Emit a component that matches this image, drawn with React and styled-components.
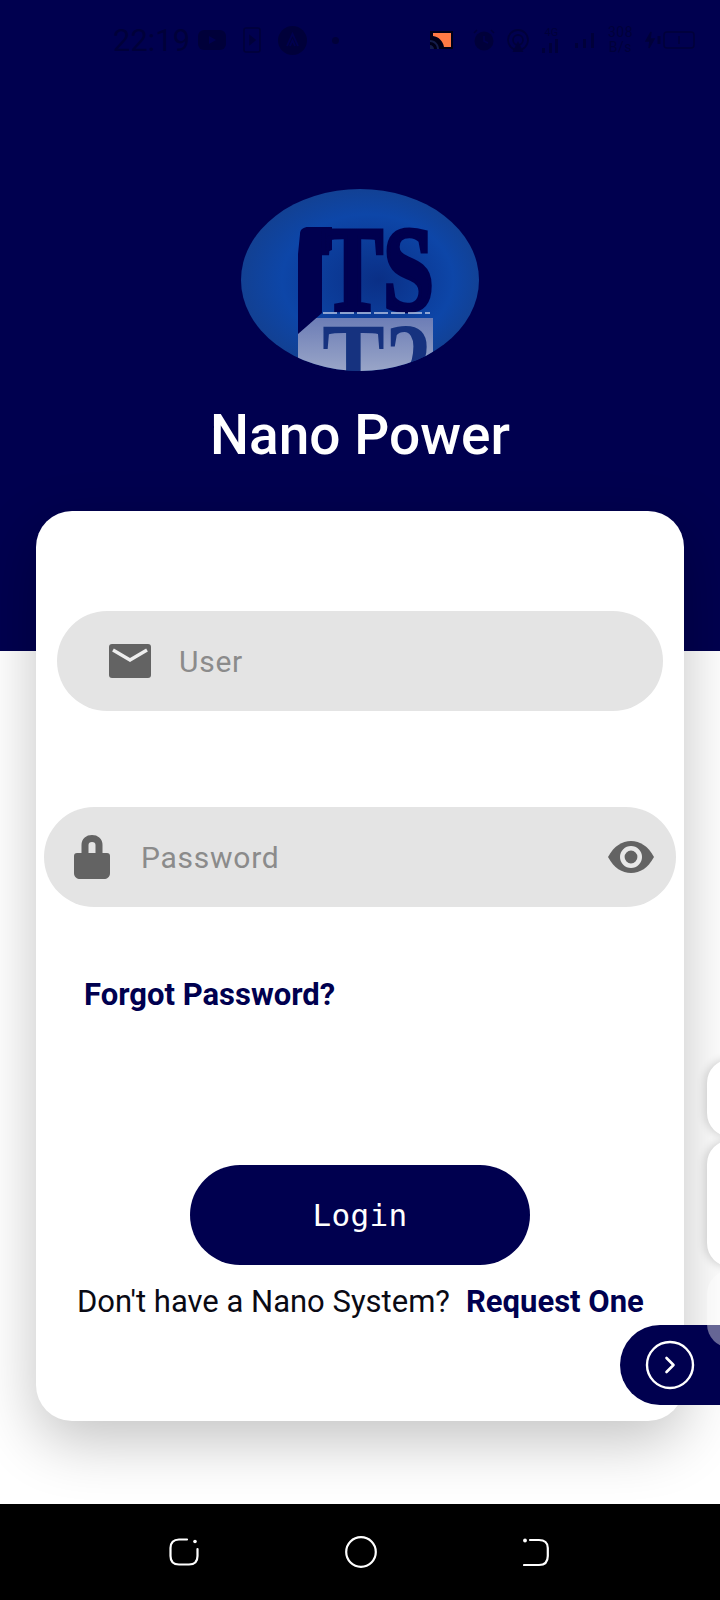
import React from 'react';
import styled, { createGlobalStyle } from 'styled-components';

const NAVY = '#00004f';
const INK = '#00003a';

const GlobalStyle = createGlobalStyle`
  html, body {
    margin: 0;
    padding: 0;
    background: #ffffff;
    font-family: Roboto, "Liberation Sans", sans-serif;
  }
`;

export default function App() {
  return (
    <Page>
      <GlobalStyle />
      <Main>
        <Header>
          <StatusBar>
            <Time>22:19</Time>
            <StatusIcons />
            <StatusRight />
          </StatusBar>
          <Logo />
          <Title>Nano Power</Title>
        </Header>
        <Card>
          <Field $inset={21} $iconGap={28} $pad={52}>
            <MailIcon />
            <Placeholder>User</Placeholder>
          </Field>
          <Field $inset={8} $iconGap={31} $pad={30} $top={96}>
            <LockIcon />
            <Placeholder>Password</Placeholder>
            <EyeIcon />
          </Field>
          <Forgot>Forgot Password?</Forgot>
          <LoginButton>Login</LoginButton>
          <Footer>
            Don't have a Nano System?
            <RequestLink>Request One</RequestLink>
          </Footer>
        </Card>
      </Main>
      <SidePill>
        <svg width="50" height="50" viewBox="0 0 50 50" fill="none" stroke="#fff">
          <circle cx="25" cy="25" r="23" strokeWidth="2.4" />
          <path d="M21.5 18 L28.5 25 L21.5 32" strokeWidth="2.6" strokeLinecap="round" strokeLinejoin="round" />
        </svg>
      </SidePill>
      <SideStack>
        <SidePanel $height={78} />
        <SidePanel $height={127} />
        <SidePanel $height={78} $faded />
      </SideStack>
      <NavBar>
        <RecentIcon />
        <svg width="32" height="32" viewBox="0 0 32 32" fill="none" stroke="#fff" strokeWidth="2.2">
          <circle cx="16" cy="16" r="14.8" />
        </svg>
        <BackIcon />
      </NavBar>
    </Page>
  );
}

function StatusIcons() {
  return (
    <IconRow>
      <svg width="28" height="20" viewBox="0 0 28 20">
        <rect width="28" height="20" rx="6" fill={INK} />
        <path d="M11 6 L18 10 L11 14 Z" fill={NAVY} />
      </svg>
      <svg width="18" height="26" viewBox="0 0 18 26" fill="none" stroke={INK} strokeWidth="1.6">
        <rect x="1" y="1" width="16" height="24" rx="2" />
        <path d="M7 9 L12 13 L7 17 Z" fill={INK} />
      </svg>
      <svg width="29" height="29" viewBox="0 0 29 29">
        <circle cx="14.5" cy="14.500" r="14.5" fill={INK} />
        <path d="M9 20 L14.5 8 L20 20 M12 20 L14.5 14.500 L17 20" fill="none" stroke={NAVY} strokeWidth="1.8" />
      </svg>
      <StatusDot />
    </IconRow>
  );
}

function StatusRight() {
  return (
    <RightRow>
      <CastIcon viewBox="0 0 23 18" width="23" height="18">
        <rect width="23" height="18" fill="#000018" />
        <path d="M3 2 H21 V16 H14 C13 10 9 6 3 5 Z" fill="#ff7a45" />
        <path d="M0 9 C5 9 9 13 9 18 H7 C7 14 4 11 0 11 Z M0 14 C2 14 4 16 4 18 H0 Z" fill="#141d4a" />
      </CastIcon>
      <svg width="22" height="22" viewBox="0 0 22 22">
        <circle cx="11" cy="12" r="9.500" fill={INK} />
        <path d="M1 4 L4 1 M21 4 L18 1" stroke={INK} strokeWidth="1.6" />
        <path d="M11 7 V12 L15 14" stroke={NAVY} strokeWidth="1.5" fill="none" />
      </svg>
      <svg width="22" height="23" viewBox="0 0 22 23" fill="none" stroke={INK} strokeWidth="1.8">
        <circle cx="11" cy="11" r="10" />
        <circle cx="11" cy="11" r="5" />
        <path d="M7 22 L11 14 L15 22 Z" fill={INK} />
      </svg>
      <SignalBlock>
        <TinyLabel>4G</TinyLabel>
        <svg width="21" height="15" viewBox="0 0 21 15" fill={INK}>
          <rect x="1" y="10" width="3" height="5" />
          <rect x="8" y="5" width="3" height="10" />
          <rect x="14" y="1" width="3" height="14" />
        </svg>
      </SignalBlock>
      <svg width="22" height="16" viewBox="0 0 22 16" fill={INK}>
        <rect x="1" y="11" width="3" height="5" />
        <rect x="9" y="7" width="3" height="9" />
        <rect x="17" y="1" width="3" height="15" />
      </svg>
      <Speed>
        308
        <br />
        B/s
      </Speed>
      <svg width="50" height="18" viewBox="0 0 50 18" fill="none" stroke={INK} strokeWidth="1.5">
        <path d="M6 1 L1 10 H5 L4 17 L9 8 H5 Z" fill={INK} />
        <path d="M14 5 V13" strokeWidth="3" />
        <rect x="19" y="1" width="30" height="16" rx="3" />
        <path d="M34 5 V13" />
      </svg>
    </RightRow>
  );
}

function Logo() {
  return (
    <LogoMark viewBox="0 0 240 184" width="240" height="184">
      <defs>
        <radialGradient id="logoBlue" cx="0.5" cy="0.5" r="0.6" fx="0.58" fy="0.5">
          <stop offset="0" stopColor="#0a2f86" />
          <stop offset="0.6" stopColor="#0d46a8" />
          <stop offset="1" stopColor="#153d86" />
        </radialGradient>
        <linearGradient id="logoGrey" x1="0" y1="0" x2="0" y2="1">
          <stop offset="0" stopColor="#6c7db6" />
          <stop offset="1" stopColor="#9aa6c8" />
        </linearGradient>
        <clipPath id="logoClip">
          <ellipse cx="120" cy="92" rx="119" ry="91" />
        </clipPath>
        <filter id="logoSoft" x="-5%" y="-5%" width="110%" height="110%">
          <feGaussianBlur stdDeviation="0.6" />
        </filter>
      </defs>
      <ellipse cx="120" cy="92" rx="119" ry="91" fill="url(#logoBlue)" />
      <g clipPath="url(#logoClip)">
        <g filter="url(#logoSoft)">
          <rect x="58" y="130" width="135" height="54" fill="url(#logoGrey)" />
          <path d="M60 46 C60 41 64 39 68 39 H92 V62 L82 66 V125 L58 146 V66 Z" fill={NAVY} />
          <LogoLetters x="82" y="122" fill={NAVY} stroke={NAVY} strokeWidth="4.5" textLength="112" lengthAdjust="spacingAndGlyphs">
            TS
          </LogoLetters>
          <LogoLetters x="82" y="218" fill="#16337f" textLength="110" lengthAdjust="spacingAndGlyphs">
            T2
          </LogoLetters>
        </g>
        <path d="M83 125 H190" stroke="#b9c6e4" strokeWidth="1.6" strokeDasharray="14 3" />
      </g>
    </LogoMark>
  );
}

function MailIcon() {
  return (
    <svg width="42" height="34" viewBox="0 0 42 34">
      <rect width="42" height="34" rx="3" fill="#636363" />
      <path d="M4 6 L21 16 L38 6" fill="none" stroke="#eeeeee" strokeWidth="3.4" />
    </svg>
  );
}

function LockIcon() {
  return (
    <svg width="36" height="44" viewBox="0 0 36 44">
      <path d="M11 20 V10 C11 5.500 14 3.500 18 3.500 C22 3.500 25 5.500 25 10 V20" fill="none" stroke="#636363" strokeWidth="7" />
      <path d="M3 18 H33 C35 18 36 19 36 21 V38 C36 42 33 44 30 44 H6 C3 44 0 42 0 38 V21 C0 19 1 18 3 18 Z" fill="#636363" />
    </svg>
  );
}

function EyeIcon() {
  return (
    <EyeWrap>
      <svg width="46" height="32" viewBox="0 0 46 32">
        <path d="M0 16 C6 5 14 0 23 0 C32 0 40 5 46 16 C40 27 32 32 23 32 C14 32 6 27 0 16 Z" fill="#636363" />
        <circle cx="23" cy="16" r="8.700" fill="none" stroke="#e8e8e8" strokeWidth="4.6" />
      </svg>
    </EyeWrap>
  );
}

function RecentIcon() {
  return (
    <svg width="30" height="28" viewBox="0 0 30 28" fill="none" stroke="#fff" strokeWidth="2.2" strokeLinecap="round">
      <path d="M18 1.500 H10 C4.500 1.500 1.500 4.500 1.500 10 V18 C1.500 23.500 4.500 26.500 10 26.500 H20 C25.500 26.500 28.500 23.500 28.500 18 V11" />
      <circle cx="26" cy="3.500" r="1.800" fill="#fff" stroke="none" />
    </svg>
  );
}

function BackIcon() {
  return (
    <svg width="26" height="29" viewBox="0 0 26 29" fill="none" stroke="#fff" strokeWidth="2.2" strokeLinecap="round">
      <path d="M7 2 H16 C21.500 2 24.800 5 24.800 10 V18 C24.800 24 21.500 27 16 27 H1" />
      <circle cx="2" cy="2.500" r="1.900" fill="#fff" stroke="none" />
    </svg>
  );
}

const Page = styled.div`
  position: relative;
  width: 720px;
  height: 1600px;
  overflow: hidden;
  display: flex;
  flex-direction: column;
  background: #ffffff;
`;

const Main = styled.div`
  flex: 1;
  min-height: 0;
`;

const Header = styled.header`
  height: 651px;
  background: ${NAVY};
  display: flex;
  flex-direction: column;
  align-items: center;
`;

const StatusBar = styled.div`
  box-sizing: border-box;
  align-self: stretch;
  height: 36px;
  margin-top: 22px;
  padding: 0 25px 0 113px;
  display: flex;
  align-items: center;
`;

const Time = styled.span`
  font-size: 31px;
  color: ${INK};
`;

const IconRow = styled.div`
  display: flex;
  align-items: center;
  gap: 17px;
  margin-left: 8px;
`;

const StatusDot = styled.span`
  width: 7px;
  height: 7px;
  margin-left: 8px;
  border-radius: 50%;
  background: ${INK};
`;

const RightRow = styled.div`
  display: flex;
  align-items: center;
  gap: 12px;
  margin-left: auto;
`;

const CastIcon = styled.svg`
  margin-right: 8px;
`;

const SignalBlock = styled.div`
  display: flex;
  flex-direction: column;
  align-items: center;
`;

const TinyLabel = styled.span`
  font-size: 11px;
  line-height: 11px;
  color: ${INK};
`;

const Speed = styled.span`
  font-size: 14px;
  line-height: 15px;
  letter-spacing: 0.5px;
  text-align: center;
  color: ${INK};
`;

const LogoMark = styled.svg`
  margin-top: 130px;
`;

const LogoLetters = styled.text`
  font-family: "Liberation Serif", serif;
  font-size: 121px;
  font-weight: 700;
`;

const Title = styled.h1`
  margin: 28px 0 0;
  font-size: 55px;
  line-height: 70px;
  font-weight: 500;
  color: #ffffff;
`;

const Card = styled.section`
  position: relative;
  box-sizing: border-box;
  width: 648px;
  height: 910px;
  margin: -140px 0 0 36px;
  padding-top: 100px;
  display: flex;
  flex-direction: column;
  background: #ffffff;
  border-radius: 36px;
  box-shadow: 0 20px 60px rgba(0, 0, 0, 0.24);
`;

const Field = styled.div`
  box-sizing: border-box;
  height: 100px;
  margin: ${p => p.$top || 0}px ${p => p.$inset}px 0;
  padding-left: ${p => p.$pad}px;
  display: flex;
  align-items: center;
  gap: ${p => p.$iconGap}px;
  background: #e4e4e4;
  border-radius: 50px;
`;

const Placeholder = styled.span`
  font-size: 30px;
  letter-spacing: 0.75px;
  color: #8b8b8b;
`;

const EyeWrap = styled.span`
  display: flex;
  margin-left: auto;
  margin-right: 22px;
`;

const Forgot = styled.a`
  margin: 71px 0 0 48px;
  font-size: 31px;
  line-height: 34px;
  font-weight: 700;
  color: ${NAVY};
`;

const LoginButton = styled.button`
  align-self: center;
  width: 340px;
  height: 100px;
  margin-top: 153px;
  border: 0;
  border-radius: 50px;
  background: ${NAVY};
  color: #ffffff;
  font-family: "DejaVu Sans Mono", "Liberation Mono", monospace;
  font-size: 31px;
  letter-spacing: 0.3px;
`;

const Footer = styled.p`
  margin: 19px 0 0 41px;
  font-size: 31px;
  line-height: 36px;
  color: #0a0a14;
  white-space: nowrap;
`;

const RequestLink = styled.a`
  margin-left: 16px;
  font-weight: 700;
  color: ${NAVY};
`;

const SideStack = styled.div`
  position: absolute;
  top: 1059px;
  left: 707px;
  display: flex;
  flex-direction: column;
  gap: 3px;
`;

const SidePanel = styled.div`
  width: 40px;
  height: ${p => p.$height}px;
  border-radius: 24px 0 0 24px;
  background: ${p => (p.$faded ? 'rgba(255, 255, 255, 0.4)' : '#ffffff')};
  box-shadow: ${p => (p.$faded ? 'none' : '-2px 0 8px rgba(0, 0, 0, 0.16)')};
`;

const SidePill = styled.div`
  position: absolute;
  top: 1325px;
  left: 620px;
  width: 100px;
  height: 80px;
  padding-left: 25px;
  box-sizing: border-box;
  display: flex;
  align-items: center;
  background: ${NAVY};
  border-radius: 40px 0 0 40px;
`;

const NavBar = styled.nav`
  height: 96px;
  padding: 0 171px 0 169px;
  display: flex;
  align-items: center;
  justify-content: space-between;
  background: #000000;
`;
